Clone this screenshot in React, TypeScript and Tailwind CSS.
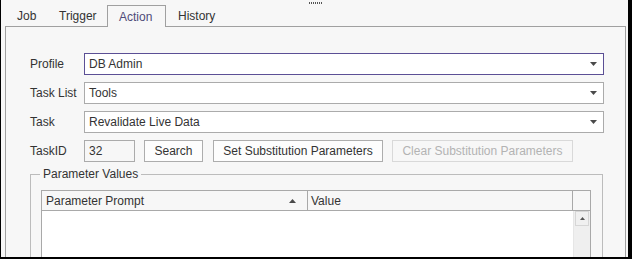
import React from "react";

const Arrow = ({ up = false }: { up?: boolean }) => (
  <svg width="7" height="4" viewBox="0 0 7 4" className="shrink-0">
    <polygon points={up ? "3.5,0 7,4 0,4" : "0,0 7,0 3.5,4"} fill="#4a4a4a" />
  </svg>
);

const Combo = ({ value, focused }: { value: string; focused?: boolean }) => (
  <div
    className={`flex-1 h-[22px] flex items-center justify-between bg-white pl-[4px] pr-[6px] border ${
      focused ? "border-[#5b4f95]" : "border-[#ababab]"
    }`}
  >
    <span>{value}</span>
    <Arrow />
  </div>
);

const Row = ({ label, children }: { label: string; children: React.ReactNode }) => (
  <div className="flex items-center h-[22px] mb-[7px]">
    <div className="w-[54px] shrink-0">{label}</div>
    {children}
  </div>
);

const tabs = [
  { name: "Job", w: "w-[42px]" },
  { name: "Trigger", w: "w-[60px]" },
  { name: "Action", w: "w-[59px]", active: true },
  { name: "History", w: "w-[62px]" },
];

export default function App() {
  return (
    <div className="w-[632px] h-[259px] overflow-hidden bg-[#f7f7f7] border-l border-r-4 border-b-2 border-black text-[12px] text-[#333333] font-['Liberation_Sans',Arial,sans-serif] leading-none">
      {/* splitter grip */}
      <div className="h-[5px] flex gap-[1px] pl-[308px] pt-[2px]">
        {Array.from({ length: 7 }).map((_, i) => (
          <span key={i} className="w-px h-[2px] bg-[#555555]" />
        ))}
      </div>

      {/* tabs */}
      <div className="flex h-[21px] ml-[4px] relative z-10">
        {tabs.map((t) =>
          t.active ? (
            <div
              key={t.name}
              className={`${t.w} h-[22px] border border-b-0 border-[#a0a0a0] bg-[#f7f7f7] pl-[11px] flex items-center text-[#4f4b78]`}
            >
              {t.name}
            </div>
          ) : (
            <div key={t.name} className={`${t.w} h-[21px] pl-[12px] flex items-center pt-[1px]`}>
              {t.name}
            </div>
          )
        )}
      </div>

      {/* panel */}
      <div className="ml-[4px] mr-[2px] h-[300px] border border-[#a0a0a0] pt-[26px] pl-[24px] pr-[21px]">
        <Row label="Profile">
          <Combo value="DB Admin" focused />
        </Row>
        <Row label="Task List">
          <Combo value="Tools" />
        </Row>
        <Row label="Task">
          <Combo value="Revalidate Live Data" />
        </Row>
        <div className="flex items-center h-[22px]">
          <div className="w-[54px] shrink-0">TaskID</div>
          <div className="w-[51px] h-[22px] border border-[#ababab] flex items-center pl-[4px]">32</div>
          <button className="ml-[9px] w-[59px] h-[22px] border border-[#adadad] bg-[#fdfdfd]">Search</button>
          <button className="ml-[10px] w-[170px] h-[22px] border border-[#adadad] bg-[#fdfdfd]">
            Set Substitution Parameters
          </button>
          <button className="ml-[9px] w-[181px] h-[22px] border border-[#d9d9d9] text-[#b3b3b3]">
            Clear Substitution Parameters
          </button>
        </div>

        {/* group box */}
        <div className="relative mt-[12px] mr-[1px] h-[200px] border border-[#bcbcbc]">
          <span className="absolute left-[9px] -top-[7px] px-[3px] bg-[#f7f7f7]">Parameter Values</span>
          <div className="mt-[15px] ml-[10px] mr-[11px] h-[150px] border border-[#a9a9a9] bg-white flex flex-col">
            <div className="h-[20px] flex bg-[#f7f7f7] border-b border-[#a9a9a9]">
              <div className="w-[266px] flex items-center justify-between pl-[4px] pr-[11px] border-r border-[#a9a9a9]">
                <span>Parameter Prompt</span>
                <Arrow up />
              </div>
              <div className="w-[265px] flex items-center pl-[3px] border-r border-[#a9a9a9]">Value</div>
              <div className="flex-1" />
            </div>
            <div className="flex-1 flex">
              <div className="flex-1" />
              <div className="w-[17px] bg-[#efefef] border-l border-[#e6e6e6] px-px">
                <div className="h-[15px] border border-[#d6d6d6] bg-[#f0f0f0] flex items-center justify-center">
                  <svg width="5" height="3" viewBox="0 0 5 3">
                    <polygon points="2.5,0 5,3 0,3" fill="#555555" />
                  </svg>
                </div>
              </div>
            </div>
          </div>
        </div>
      </div>
    </div>
  );
}
